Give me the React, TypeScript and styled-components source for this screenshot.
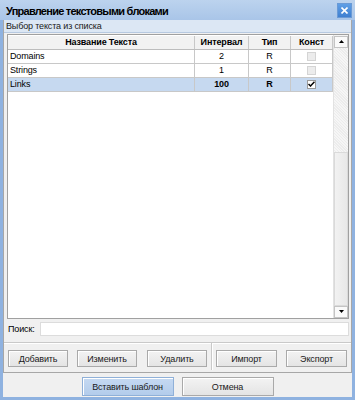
import React from "react";
import styled, { createGlobalStyle } from "styled-components";

const Global = createGlobalStyle`
  html, body { margin: 0; padding: 0; background: #ffffff; }
  body { font-family: "Liberation Sans", Arial, sans-serif; }
`;

const Window = styled.div`
  width: 355px;
  height: 400px;
  box-sizing: border-box;
  background: #f0f0f0;
  border-left: 3px solid #8fb2e0;
  border-right: 3px solid #8fb2e0;
  border-bottom: 3px solid #8fb2e0;
  display: flex;
  flex-direction: column;
  font-size: 9px;
  letter-spacing: -0.15px;
  color: #000;
`;

const TitleBar = styled.div`
  height: 20px;
  margin: 0 -3px;
  padding: 0 3px 0 6px;
  background: linear-gradient(#bcd3ee, #a9c5e8);
  display: flex;
  align-items: center;
  justify-content: space-between;
  flex-shrink: 0;
`;

const Title = styled.div`
  font-weight: bold;
  font-size: 11px;
  letter-spacing: -0.75px;
  padding-top: 1px;
`;

const CloseBtn = styled.div`
  width: 13px;
  height: 13px;
  background: linear-gradient(#5f9fe6, #3f7fd0);
  border: 1px solid #6a9ad6;
  display: flex;
  align-items: center;
  justify-content: center;
`;

const Panel = styled.div`
  height: 353px;
  box-sizing: border-box;
  border: 1px solid #a7a7a7;
  border-top: none;
  display: flex;
  flex-direction: column;
`;

const PanelHeader = styled.div`
  height: 12px;
  background: #dce7f4;
  border-bottom: 1px solid #b7c9e0;
  padding-left: 2px;
  display: flex;
  align-items: center;
  color: #1a1a1a;
`;

const GridFrame = styled.div`
  margin: 1px 2px 0 3px;
  height: 288px;
  border: 1px solid #a0a0a0;
  background: #fff;
  display: flex;
`;

const GridBody = styled.div`
  flex: 1;
  display: flex;
  flex-direction: column;
  padding-top: 1px;
`;

const Row = styled.div<{ $header?: boolean; $selected?: boolean }>`
  display: grid;
  grid-template-columns: 187px 54px 42px 42px;
  height: 13px;
  background: ${(p) => (p.$selected ? "#c6d9f0" : p.$header ? "#f2f2f2" : "#fff")};
  font-weight: ${(p) => (p.$header ? "bold" : "normal")};
  border-bottom: 1px solid ${(p) => (p.$header ? "#bdbdbd" : "#c8c8c8")};
`;

const Cell = styled.div<{ $align?: string; $bold?: boolean }>`
  display: flex;
  align-items: center;
  justify-content: ${(p) => p.$align || "center"};
  padding-left: ${(p) => (p.$align === "flex-start" ? "2px" : "0")};
  border-right: 1px solid #c8c8c8;
  font-weight: ${(p) => (p.$bold ? "bold" : "inherit")};
  overflow: hidden;
  white-space: nowrap;
`;

const Check = styled.div<{ $checked?: boolean }>`
  width: 9px;
  height: 9px;
  box-sizing: border-box;
  border: 1px solid ${(p) => (p.$checked ? "#9a9a9a" : "#d4d4d4")};
  background: ${(p) => (p.$checked ? "#fff" : "#ececec")};
  display: flex;
  align-items: center;
  justify-content: center;
`;

const ScrollBar = styled.div`
  width: 14px;
  display: flex;
  flex-direction: column;
  border-left: 1px solid #e2e2e2;
  background: #f4f4f4;
  padding-top: 1px;
`;

const ScrollBtn = styled.div`
  height: 12px;
  box-sizing: border-box;
  border: 1px solid #c4c4c4;
  background: #fafafa;
  display: flex;
  align-items: center;
  justify-content: center;
`;

const ScrollTrack = styled.div`
  flex: 0 0 104px;
  background: repeating-linear-gradient(45deg, #f6f6f6 0 1px, #ececec 1px 2px);
`;

const ScrollThumb = styled.div`
  flex: 1;
  box-sizing: border-box;
  border: 1px solid #dadada;
  background: linear-gradient(90deg, #f2f2f2, #e8e8e8);
`;

const SearchRow = styled.div`
  display: flex;
  align-items: center;
  height: 15px;
  margin: 3px 2px 0 3px;
`;

const SearchLabel = styled.div`
  width: 32px;
  padding-left: 1px;
`;

const SearchInput = styled.div`
  flex: 1;
  height: 12px;
  background: #fff;
  border: 1px solid #dcdcdc;
`;

const Divider = styled.div`
  margin: 6px 0 0 0;
  border-top: 1px solid #c9c9c9;
  border-bottom: 1px solid #fff;
`;

const ButtonRow = styled.div`
  display: flex;
  align-items: stretch;
  padding: 6px 2px 0 4px;
  height: 22px;
`;

const Btn = styled.div<{ $primary?: boolean; $w?: number }>`
  width: ${(p) => p.$w || 60}px;
  height: ${(p) => (p.$primary !== undefined ? 19 : 17)}px;
  box-sizing: border-box;
  border: 1px solid ${(p) => (p.$primary ? "#8fb0d8" : "#a9a9a9")};
  background: ${(p) => (p.$primary ? "linear-gradient(#c5d9f2, #b3cceb)" : "linear-gradient(#f3f3f3, #e4e4e4)")};
  box-shadow: inset 1px 1px 0 #fff;
  display: flex;
  align-items: center;
  justify-content: center;
  color: #1a1a1a;
`;

const Gap = styled.div<{ $w: number }>`
  width: ${(p) => p.$w}px;
  flex-shrink: 0;
`;

const VSep = styled.div`
  width: 1px;
  margin: -7px 4px 0 4px;
  background: #c9c9c9;
  box-shadow: 1px 0 0 #fff;
  height: 27px;
`;

const Footer = styled.div`
  display: flex;
  justify-content: center;
  gap: 8px;
  padding-top: 4px;
`;

const rows = [
  { name: "Domains", interval: "2", type: "R", checked: false, selected: false },
  { name: "Strings", interval: "1", type: "R", checked: false, selected: false },
  { name: "Links", interval: "100", type: "R", checked: true, selected: true },
];

export default function App() {
  return (
    <>
      <Global />
      <Window>
        <TitleBar>
          <Title>Управление текстовыми блоками</Title>
          <CloseBtn>
            <svg width="7" height="7" viewBox="0 0 7 7">
              <path d="M0.5 0.5 L6.5 6.5 M6.5 0.5 L0.5 6.5" stroke="#fff" strokeWidth="1.6" />
            </svg>
          </CloseBtn>
        </TitleBar>
        <Panel>
          <PanelHeader>Выбор текста из списка</PanelHeader>
          <GridFrame>
            <GridBody>
              <Row $header>
                <Cell>Название Текста</Cell>
                <Cell>Интервал</Cell>
                <Cell>Тип</Cell>
                <Cell>Конст</Cell>
              </Row>
              {rows.map((r) => (
                <Row key={r.name} $selected={r.selected}>
                  <Cell $align="flex-start">{r.name}</Cell>
                  <Cell $bold={r.selected}>{r.interval}</Cell>
                  <Cell $bold={r.selected}>{r.type}</Cell>
                  <Cell>
                    <Check $checked={r.checked}>
                      {r.checked && (
                        <svg width="7" height="6" viewBox="0 0 7 6">
                          <path d="M0.5 3 L2.5 5 L6.5 0.8" stroke="#000" strokeWidth="1.5" fill="none" />
                        </svg>
                      )}
                    </Check>
                  </Cell>
                </Row>
              ))}
            </GridBody>
            <ScrollBar>
              <ScrollBtn>
                <svg width="5" height="3" viewBox="0 0 5 3">
                  <path d="M0 3 L2.5 0 L5 3 Z" fill="#000" />
                </svg>
              </ScrollBtn>
              <ScrollTrack />
              <ScrollThumb />
              <ScrollBtn>
                <svg width="5" height="3" viewBox="0 0 5 3">
                  <path d="M0 0 L2.5 3 L5 0 Z" fill="#000" />
                </svg>
              </ScrollBtn>
            </ScrollBar>
          </GridFrame>
          <SearchRow>
            <SearchLabel>Поиск:</SearchLabel>
            <SearchInput />
          </SearchRow>
          <Divider />
          <ButtonRow>
            <Btn>Добавить</Btn>
            <Gap $w={9} />
            <Btn>Изменить</Btn>
            <Gap $w={10} />
            <Btn>Удалить</Btn>
            <VSep />
            <Btn $w={61}>Импорт</Btn>
            <Gap $w={9} />
            <Btn $w={61}>Экспорт</Btn>
          </ButtonRow>
        </Panel>
        <Footer>
          <Btn $primary $w={92}>Вставить шаблон</Btn>
          <Btn $primary={false} $w={92}>Отмена</Btn>
        </Footer>
      </Window>
    </>
  );
}
